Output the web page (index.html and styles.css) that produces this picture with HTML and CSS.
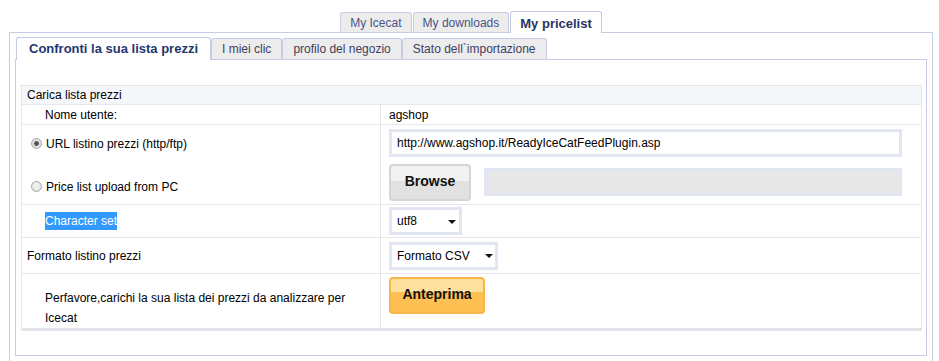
FILE: index.html
```html
<!DOCTYPE html>
<html lang="it">
<head>
<meta charset="utf-8">
<title>My pricelist</title>
<link rel="stylesheet" href="styles.css">
</head>
<body>
<div class="page">
  <div class="top-tabs">
    <div class="ttab">My Icecat</div>
    <div class="ttab">My downloads</div>
    <div class="ttab active">My pricelist</div>
  </div>
  <div class="outer-panel">
    <div class="inner-tabs">
      <div class="itab active">Confronti la sua lista prezzi</div>
      <div class="itab">I miei clic</div>
      <div class="itab">profilo del negozio</div>
      <div class="itab">Stato dell`importazione</div>
    </div>
    <div class="inner-panel">
      <table class="form-table">
        <colgroup><col class="col-label"><col></colgroup>
        <tr class="head-row"><td colspan="2" class="head-cell">Carica lista prezzi</td></tr>
        <tr class="row-user">
          <td class="indent">Nome utente:</td>
          <td class="value">agshop</td>
        </tr>
        <tr class="row-url">
          <td class="radio-cell"><span class="radio checked"></span><span>URL listino prezzi (http/ftp)</span></td>
          <td class="value"><div class="textbox url-box">http://www.agshop.it/ReadyIceCatFeedPlugin.asp</div></td>
        </tr>
        <tr class="row-upload">
          <td class="radio-cell lower"><span class="radio"></span><span>Price list upload from PC</span></td>
          <td class="value">
            <div class="upload">
              <div class="btn btn-gray">Browse</div>
              <div class="textbox file-box"></div>
            </div>
          </td>
        </tr>
        <tr class="row-charset">
          <td class="indent"><span class="selected-text">Character set</span></td>
          <td class="value"><div class="select select-utf">utf8<span class="arrow"></span></div></td>
        </tr>
        <tr class="row-format">
          <td class="plain">Formato listino prezzi</td>
          <td class="value"><div class="select select-format">Formato CSV<span class="arrow"></span></div></td>
        </tr>
        <tr class="row-preview">
          <td class="indent note">Perfavore,carichi la sua lista dei prezzi da analizzare per Icecat</td>
          <td class="value top"><div class="btn btn-orange">Anteprima</div></td>
        </tr>
      </table>
    </div>
  </div>
</div>
</body>
</html>
```
FILE: styles.css
```css
* { box-sizing: border-box; }

body {
  margin: 0;
  background: #ffffff;
  color: #000000;
  font-family: "Liberation Sans", Arial, sans-serif;
  font-size: 12px;
}

.page {
  width: 933px;
  padding: 11px 0 0 9px;
}

/* top tabs */
.top-tabs {
  position: relative;
  z-index: 1;
  display: flex;
  justify-content: center;
  gap: 1px;
  height: 22px;
  margin-bottom: -1px;
}

.ttab {
  height: 20px;
  margin-top: 1px;
  padding: 1px 9px 0;
  line-height: 19px;
  border: 1px solid #c6cbe3;
  border-bottom: none;
  border-radius: 3px 3px 0 0;
  background: #ececec;
  color: #4b5387;
  font-size: 12px;
}

.ttab.active {
  height: 22px;
  margin-top: 0;
  padding: 2px 9px 0;
  background: #ffffff;
  color: #2c3263;
  font-size: 13px;
  font-weight: bold;
}

/* outer panel */
.outer-panel {
  border: 1px solid #c6cbe8;
  padding: 4px 5px 20px;
}

.inner-tabs {
  position: relative;
  z-index: 1;
  display: flex;
  gap: 0;
  height: 23px;
  margin-bottom: -1px;
  padding-left: 1px;
}

.itab {
  height: 21px;
  margin-top: 1px;
  padding: 1px 10px 0;
  line-height: 18px;
  border: 1px solid #c6cbe3;
  border-bottom: none;
  border-radius: 3px 3px 0 0;
  background: #ececec;
  color: #3d4160;
  font-size: 12px;
}

.itab.active {
  height: 23px;
  margin-top: 0;
  padding: 2px 12px 0;
  background: #ffffff;
  color: #1f3670;
  font-size: 13px;
  font-weight: bold;
}

.inner-panel {
  border: 1px solid #c6cbe8;
  padding: 25px 4px 24px 5px;
}

/* table */
.form-table {
  width: 901px;
  border-collapse: collapse;
  table-layout: fixed;
  border: 1px solid #e3e3ea;
  border-bottom: 3px solid #e3e3ea;
}

.col-label { width: 359px; }

.form-table td {
  border: 1px solid #e6e6ec;
  padding: 0;
  vertical-align: middle;
}

.head-cell {
  height: 19px;
  padding-left: 5px !important;
  background: #f6f7fb;
}

.row-user td { height: 20px; }

.indent { padding-left: 23px !important; }
.plain { padding-left: 5px !important; }
.value { padding-left: 8px !important; }

.row-url td {
  height: 36px;
  border-bottom: none;
  padding-top: 1px !important;
}

.row-upload td {
  height: 44px;
  border-top: none;
}

.radio-cell {
  padding-left: 9px !important;
}

.radio-cell.lower { padding-top: 8px !important; }

.radio-cell span { vertical-align: middle; }

.radio {
  display: inline-block;
  width: 11px;
  height: 11px;
  margin-right: 4px;
  border: 1px solid #a9a9a9;
  border-radius: 50%;
  background: radial-gradient(circle at 50% 40%, #f4f4f4 0, #dcdcdc 100%);
}

.radio.checked {
  background: radial-gradient(circle, #4a4a4a 0, #555 2px, #dadada 2.6px, #e8e8e8 100%);
}

.textbox {
  height: 28px;
  border: 3px solid #e2e6f3;
  background: #ffffff;
  padding-left: 5px;
  line-height: 22px;
}

.url-box { width: 513px; }

.upload {
  display: flex;
  align-items: center;
  gap: 13px;
}

.file-box {
  width: 418px;
  height: 28px;
  background: #e8e8e8;
}

.btn {
  display: flex;
  align-items: center;
  justify-content: center;
  height: 37px;
  font-size: 14px;
  font-weight: bold;
  border-radius: 4px;
  padding-bottom: 3px;
}

.btn-gray {
  width: 82px;
  border: 2px solid #d5d5d5;
  background: linear-gradient(#f2f2f2 0, #f2f2f2 45%, #e1e1e1 45%, #e1e1e1 100%);
  color: #111;
}

.btn-orange {
  width: 96px;
  border: 2px solid #f7b54a;
  background: linear-gradient(#fde09e 0, #fde09e 40%, #fec052 40%, #fec052 100%);
  color: #111;
}

.row-charset td { height: 33px; }
.row-format td { height: 36px; }

.selected-text {
  background: #3399ff;
  color: #ffffff;
  padding: 2px 0;
}

.select {
  display: flex;
  align-items: center;
  justify-content: space-between;
  height: 28px;
  border: 3px solid #e2e6f3;
  background: #ffffff;
  padding: 0 3px 0 5px;
}

.select-utf { width: 73px; }
.select-format { width: 109px; padding-right: 2px; }

.arrow {
  width: 0;
  height: 0;
  border-left: 4px solid transparent;
  border-right: 4px solid transparent;
  border-top: 4px solid #111;
  margin-top: 1px;
}

.row-preview td { vertical-align: top; }

.note {
  padding-top: 14px !important;
  padding-right: 18px !important;
  line-height: 20px;
}

.top { padding-top: 3px !important; }
```
